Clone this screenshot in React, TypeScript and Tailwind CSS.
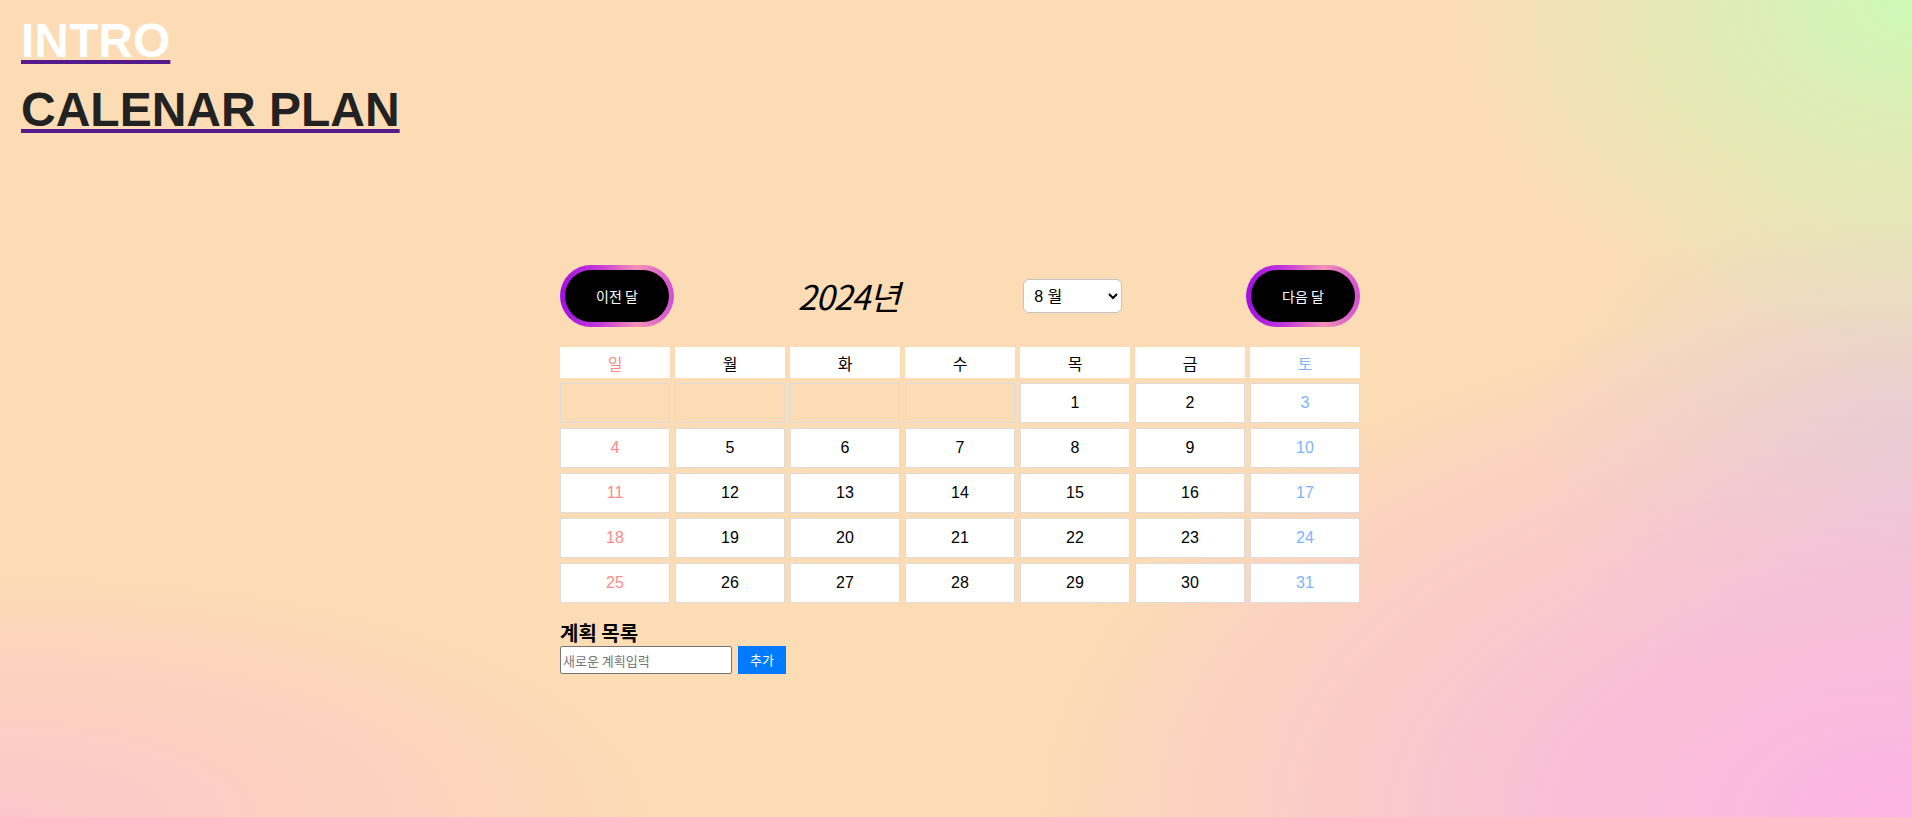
import React, { useState } from "react";

const DAYS = ["일", "월", "화", "수", "목", "금", "토"];

function PillButton({ label }: { label: string }) {
  return (
    <div className="rounded-full p-[5px] bg-[linear-gradient(90deg,#a10ee6_0%,#c43ad9_35%,#f491b6_68%,#d24fd6_100%)]">
      <button className="w-[104px] h-[52px] rounded-full bg-black text-white text-[14px] font-['Noto_Sans_CJK_KR',sans-serif]">
        {label}
      </button>
    </div>
  );
}

export default function App() {
  const [month, setMonth] = useState(8);
  const cells: (number | null)[] = [null, null, null, null];
  for (let d = 1; d <= 31; d++) cells.push(d);

  return (
    <div className="w-full h-[817px] overflow-hidden font-['Liberation_Sans','Noto_Sans_CJK_KR',sans-serif] bg-[#fcdcb4] bg-[radial-gradient(ellipse_460px_340px_at_100%_0%,#cdf8b6_0%,rgba(205,248,182,0.65)_35%,rgba(252,220,180,0)_100%),radial-gradient(ellipse_900px_520px_at_100%_100%,#fcb4e4_0%,rgba(248,182,226,0.75)_40%,rgba(252,220,180,0)_100%),radial-gradient(ellipse_700px_260px_at_0%_100%,rgba(252,196,206,0.9)_0%,rgba(252,220,180,0)_100%),radial-gradient(ellipse_380px_320px_at_100%_55%,rgba(224,214,208,0.95)_0%,rgba(252,220,180,0)_100%)]">
      <div className="pl-[21px] pt-[13px] flex flex-col gap-[14px]">
        <a className="text-[48px] leading-[55px] font-bold text-white underline decoration-[#551a8b] w-fit">
          INTRO
        </a>
        <a className="text-[48px] leading-[55px] font-bold text-[#222222] underline decoration-[#551a8b] w-fit">
          CALENAR PLAN
        </a>
      </div>

      <div className="ml-[560px] mt-[128px] w-[800px]">
        <div className="flex items-center justify-between">
          <PillButton label="이전 달" />
          <div className="italic text-[34px] leading-none text-black font-['Noto_Sans_CJK_KR',sans-serif] tracking-[-1px]">
            2024년
          </div>
          <select
            value={month}
            onChange={(e) => setMonth(Number(e.target.value))}
            className="w-[99px] h-[34px] rounded-[6px] border border-[#c4c4c4] bg-white text-[16px] pl-[6px] text-black"
          >
            {Array.from({ length: 12 }, (_, i) => (
              <option key={i + 1} value={i + 1}>
                {i + 1} 월
              </option>
            ))}
          </select>
          <PillButton label="다음 달" />
        </div>

        <div className="mt-[20px] grid grid-cols-[repeat(7,110px)] gap-x-[5px]">
          {DAYS.map((d, i) => (
            <div
              key={d}
              className={`h-[31px] bg-white flex items-center justify-center text-[16px] font-['Noto_Sans_CJK_KR',sans-serif] ${
                i === 0 ? "text-[#ff8a8a]" : i === 6 ? "text-[#80b3ff]" : "text-black"
              }`}
            >
              {d}
            </div>
          ))}
        </div>

        <div className="mt-[5px] grid grid-cols-[repeat(7,110px)] gap-[5px]">
          {cells.map((d, i) => {
            const col = i % 7;
            const color = col === 0 ? "text-[#ff8a8a]" : col === 6 ? "text-[#80b3ff]" : "text-black";
            return d === null ? (
              <div key={i} className="h-[40px] border border-[#dcdcdc]" />
            ) : (
              <div
                key={i}
                className={`h-[40px] border border-[#dcdcdc] bg-white flex items-center justify-center text-[16px] ${color}`}
              >
                {d}
              </div>
            );
          })}
        </div>

        <div className="mt-[18px]">
          <div className="text-[20px] leading-[24px] font-bold text-black font-['Noto_Sans_CJK_KR',sans-serif]">
            계획 목록
          </div>
          <div className="flex items-center gap-[6px] mt-[1px]">
            <input
              placeholder="새로운 계획입력"
              className="w-[172px] h-[28px] border border-[#767676] rounded-[2px] bg-white px-[2px] text-[13px] placeholder:text-[#757575] font-['Noto_Sans_CJK_KR',sans-serif]"
            />
            <button className="w-[48px] h-[28px] bg-[#007bff] text-white text-[13px] font-['Noto_Sans_CJK_KR',sans-serif]">
              추가
            </button>
          </div>
        </div>
      </div>
    </div>
  );
}
